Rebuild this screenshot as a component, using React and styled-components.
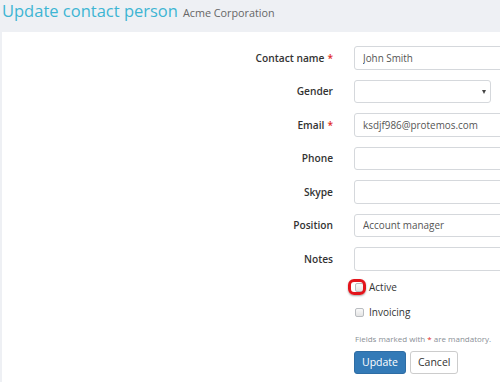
import React from "react";
import styled, { createGlobalStyle } from "styled-components";

const GlobalStyle = createGlobalStyle`
  html, body {
    margin: 0;
    padding: 0;
    background: #eef0f4;
    overflow: hidden;
  }
  body {
    font-family: "Open Sans", "Liberation Sans", sans-serif;
    color: #333;
  }
`;

const Page = styled.div`
  padding: 0 0 0 2px;
  width: 600px;
`;

const Header = styled.div`
  display: flex;
  align-items: baseline;
  gap: 5px;
  height: 32px;
`;

const Title = styled.h1`
  margin: 0;
  font-size: 16.5px;
  font-weight: 400;
  color: #3db5d3;
  line-height: 22px;
`;

const Subtitle = styled.span`
  font-size: 10.8px;
  color: #666;
`;

const Panel = styled.div`
  background: #fff;
  padding: 14px 0 20px;
`;

const Form = styled.form`
  display: grid;
  grid-template-columns: 331px 1fr;
  column-gap: 21px;
  row-gap: 10px;
  align-items: center;
`;

const Label = styled.label`
  text-align: right;
  font-size: 10.2px;
  font-weight: 600;
  color: #333;
`;

const Required = styled.span`
  color: #e02b27;
  margin-left: ${(p) => (p.$inline ? 0 : 3)}px;
`;

const Input = styled.input`
  box-sizing: border-box;
  height: 23.5px;
  width: 170px;
  border: 1px solid #d5d8dc;
  border-radius: 3px;
  padding: 0 8px;
  font-family: inherit;
  font-size: 9.9px;
  color: #555;
  background: #fff;
  outline: none;
`;

const SelectBox = styled.div`
  box-sizing: border-box;
  position: relative;
  height: 23.5px;
  width: 137px;
  border: 1px solid #d5d8dc;
  border-radius: 3px;
  background: #fff;
`;

const Caret = styled.span`
  position: absolute;
  right: 4px;
  top: 9px;
  width: 0;
  height: 0;
  border-left: 2.5px solid transparent;
  border-right: 2.5px solid transparent;
  border-top: 4px solid #444;
`;

const Controls = styled.div`
  grid-column: 2;
  display: flex;
  flex-direction: column;
  margin-top: -6px;
`;

const CheckRow = styled.label`
  position: relative;
  display: flex;
  align-items: center;
  gap: 5px;
  height: 25px;
  font-size: 10px;
  color: #333;
  padding-left: 1px;
`;

const Box = styled.span`
  box-sizing: border-box;
  width: 9px;
  height: 9px;
  border: 1px solid #b9bcc0;
  border-radius: 2px;
  background: linear-gradient(#fafafa, #e4e4e4);
`;

const Highlight = styled.span`
  position: absolute;
  left: -6px;
  top: 4px;
  width: 18px;
  height: 16px;
  box-sizing: border-box;
  border: 3px solid #e3141b;
  border-radius: 6px;
  box-shadow: 0 1px 2px rgba(0, 0, 0, 0.35);
`;

const Hint = styled.div`
  font-size: 8px;
  color: #8a8f96;
  margin-top: 8px;
  padding-left: 1px;
`;

const Buttons = styled.div`
  display: flex;
  gap: 4px;
  margin-top: 7px;
`;

const Button = styled.button`
  box-sizing: border-box;
  height: 23px;
  padding: 0 7px;
  border-radius: 3px;
  font-family: inherit;
  font-size: 10.5px;
  border: 1px solid ${(p) => (p.$primary ? "#2e6da4" : "#ccc")};
  background: ${(p) => (p.$primary ? "#337ab7" : "#fff")};
  color: ${(p) => (p.$primary ? "#fff" : "#333")};
`;

const fields = [
  { label: "Contact name", required: true, value: "John Smith" },
  { label: "Gender", select: true },
  { label: "Email", required: true, value: "ksdjf986@protemos.com" },
  { label: "Phone" },
  { label: "Skype" },
  { label: "Position", value: "Account manager" },
  { label: "Notes" },
];

export default function App() {
  return (
    <Page>
      <GlobalStyle />
      <Header>
        <Title>Update contact person</Title>
        <Subtitle>Acme Corporation</Subtitle>
      </Header>
      <Panel>
        <Form onSubmit={(e) => e.preventDefault()}>
          {fields.map((f) => (
            <React.Fragment key={f.label}>
              <Label>
                {f.label}
                {f.required && <Required>*</Required>}
              </Label>
              {f.select ? (
                <SelectBox>
                  <Caret />
                </SelectBox>
              ) : (
                <Input defaultValue={f.value || ""} />
              )}
            </React.Fragment>
          ))}
          <Controls>
            <CheckRow>
              <Box />
              Active
              <Highlight />
            </CheckRow>
            <CheckRow>
              <Box />
              Invoicing
            </CheckRow>
            <Hint>
              Fields marked with <Required $inline>*</Required> are mandatory.
            </Hint>
            <Buttons>
              <Button $primary>Update</Button>
              <Button>Cancel</Button>
            </Buttons>
          </Controls>
        </Form>
      </Panel>
    </Page>
  );
}
